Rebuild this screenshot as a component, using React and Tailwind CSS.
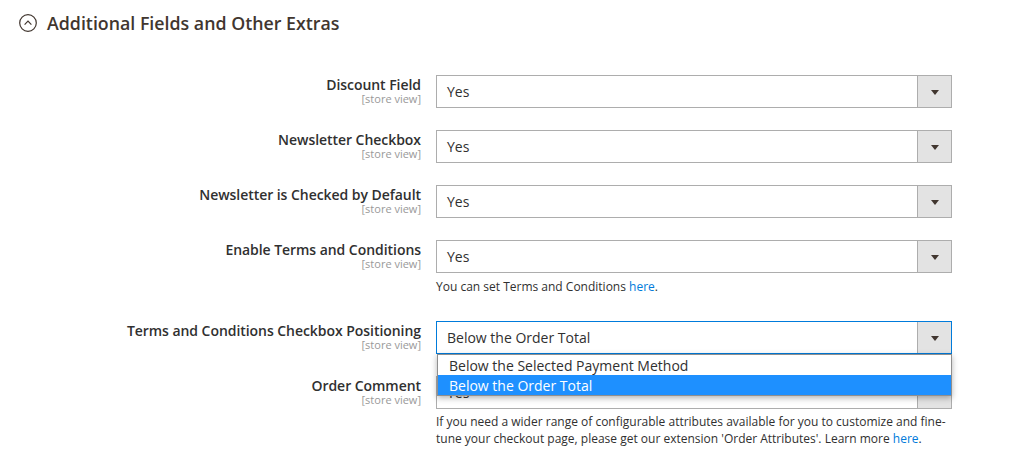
import React from "react";

function Arrow() {
  return (
    <div className="w-[34px] h-full border-l border-[#adadad] bg-[#e3e3e3] flex items-center justify-center">
      <div className="w-0 h-0 border-l-[4px] border-r-[4px] border-t-[5px] border-l-transparent border-r-transparent border-t-[#41362f] mt-[1px]" />
    </div>
  );
}

function Select({ value, focused }) {
  return (
    <div
      className={`h-[33px] w-[516px] border bg-white flex items-stretch ${
        focused ? "border-[#007bdb]" : "border-[#adadad]"
      }`}
    >
      <div className="flex-1 flex items-center pl-[10px] text-[14px] text-[#303030]">
        {value}
      </div>
      <Arrow />
    </div>
  );
}

function Label({ title }) {
  return (
    <div className="text-right pr-0">
      <div className="text-[14px] leading-[18px] font-semibold text-[#303030] pt-[1px] tracking-[-0.05px]">{title}</div>
      <div className="text-[11px] leading-[12px] text-[#999999] mt-[-1px]">[store view]</div>
    </div>
  );
}

function Row({ title, children, className }) {
  return (
    <div className={`grid grid-cols-[421px_516px] gap-x-[15px] ${className || ""}`}>
      <Label title={title} />
      <div className="relative">{children}</div>
    </div>
  );
}

export default function App() {
  return (
    <div
      className="w-[1009px] h-[463px] bg-white overflow-hidden"
      style={{ fontFamily: "'Open Sans', 'Liberation Sans', sans-serif" }}
    >
      <div className="h-[46px] flex items-center pl-[19px]">
        <svg width="18" height="18" viewBox="0 0 18 18" className="shrink-0">
          <circle cx="9" cy="9" r="8.3" fill="none" stroke="#41362f" strokeWidth="1.2" />
          <path d="M5.6 10.6 L9 7.2 L12.4 10.6" fill="none" stroke="#41362f" strokeWidth="1.2" />
        </svg>
        <h2 className="ml-[10px] mb-[1px] text-[17.8px] leading-[24px] font-semibold text-[#41362f]">
          Additional Fields and Other Extras
        </h2>
      </div>

      <div className="mt-[29px]">
        <Row title="Discount Field" className="mb-[22px]">
          <Select value="Yes" />
        </Row>
        <Row title="Newsletter Checkbox" className="mb-[22px]">
          <Select value="Yes" />
        </Row>
        <Row title="Newsletter is Checked by Default" className="mb-[22px]">
          <Select value="Yes" />
        </Row>
        <Row title="Enable Terms and Conditions" className="mb-[26px]">
          <Select value="Yes" />
          <p className="mt-[5px] text-[12px] leading-[17px] text-[#303030]">
            You can set Terms and Conditions <span className="text-[#007bdb]">here</span>.
          </p>
        </Row>
        <Row title="Terms and Conditions Checkbox Positioning" className="mb-[22px] relative z-10">
          <Select value="Below the Order Total" focused />
          <div className="absolute top-[33px] left-[1px] right-0 border border-[#8f8f8f] bg-white shadow-[0_2px_6px_rgba(0,0,0,0.3)] text-[14px]">
            <div className="h-[20px] flex items-center pl-[11px] text-[#303030]">
              Below the Selected Payment Method
            </div>
            <div className="h-[20px] flex items-center pl-[11px] bg-[#1e90ff] text-white">
              Below the Order Total
            </div>
          </div>
        </Row>
        <Row title="Order Comment">
          <Select value="Yes" />
          <p className="mt-[4px] text-[12px] leading-[17px] text-[#303030]">
            If you need a wider range of configurable attributes available for you to customize and fine-tune your
            checkout page, please get our extension 'Order Attributes'. Learn more{" "}
            <span className="text-[#007bdb]">here</span>.
          </p>
        </Row>
      </div>
    </div>
  );
}
